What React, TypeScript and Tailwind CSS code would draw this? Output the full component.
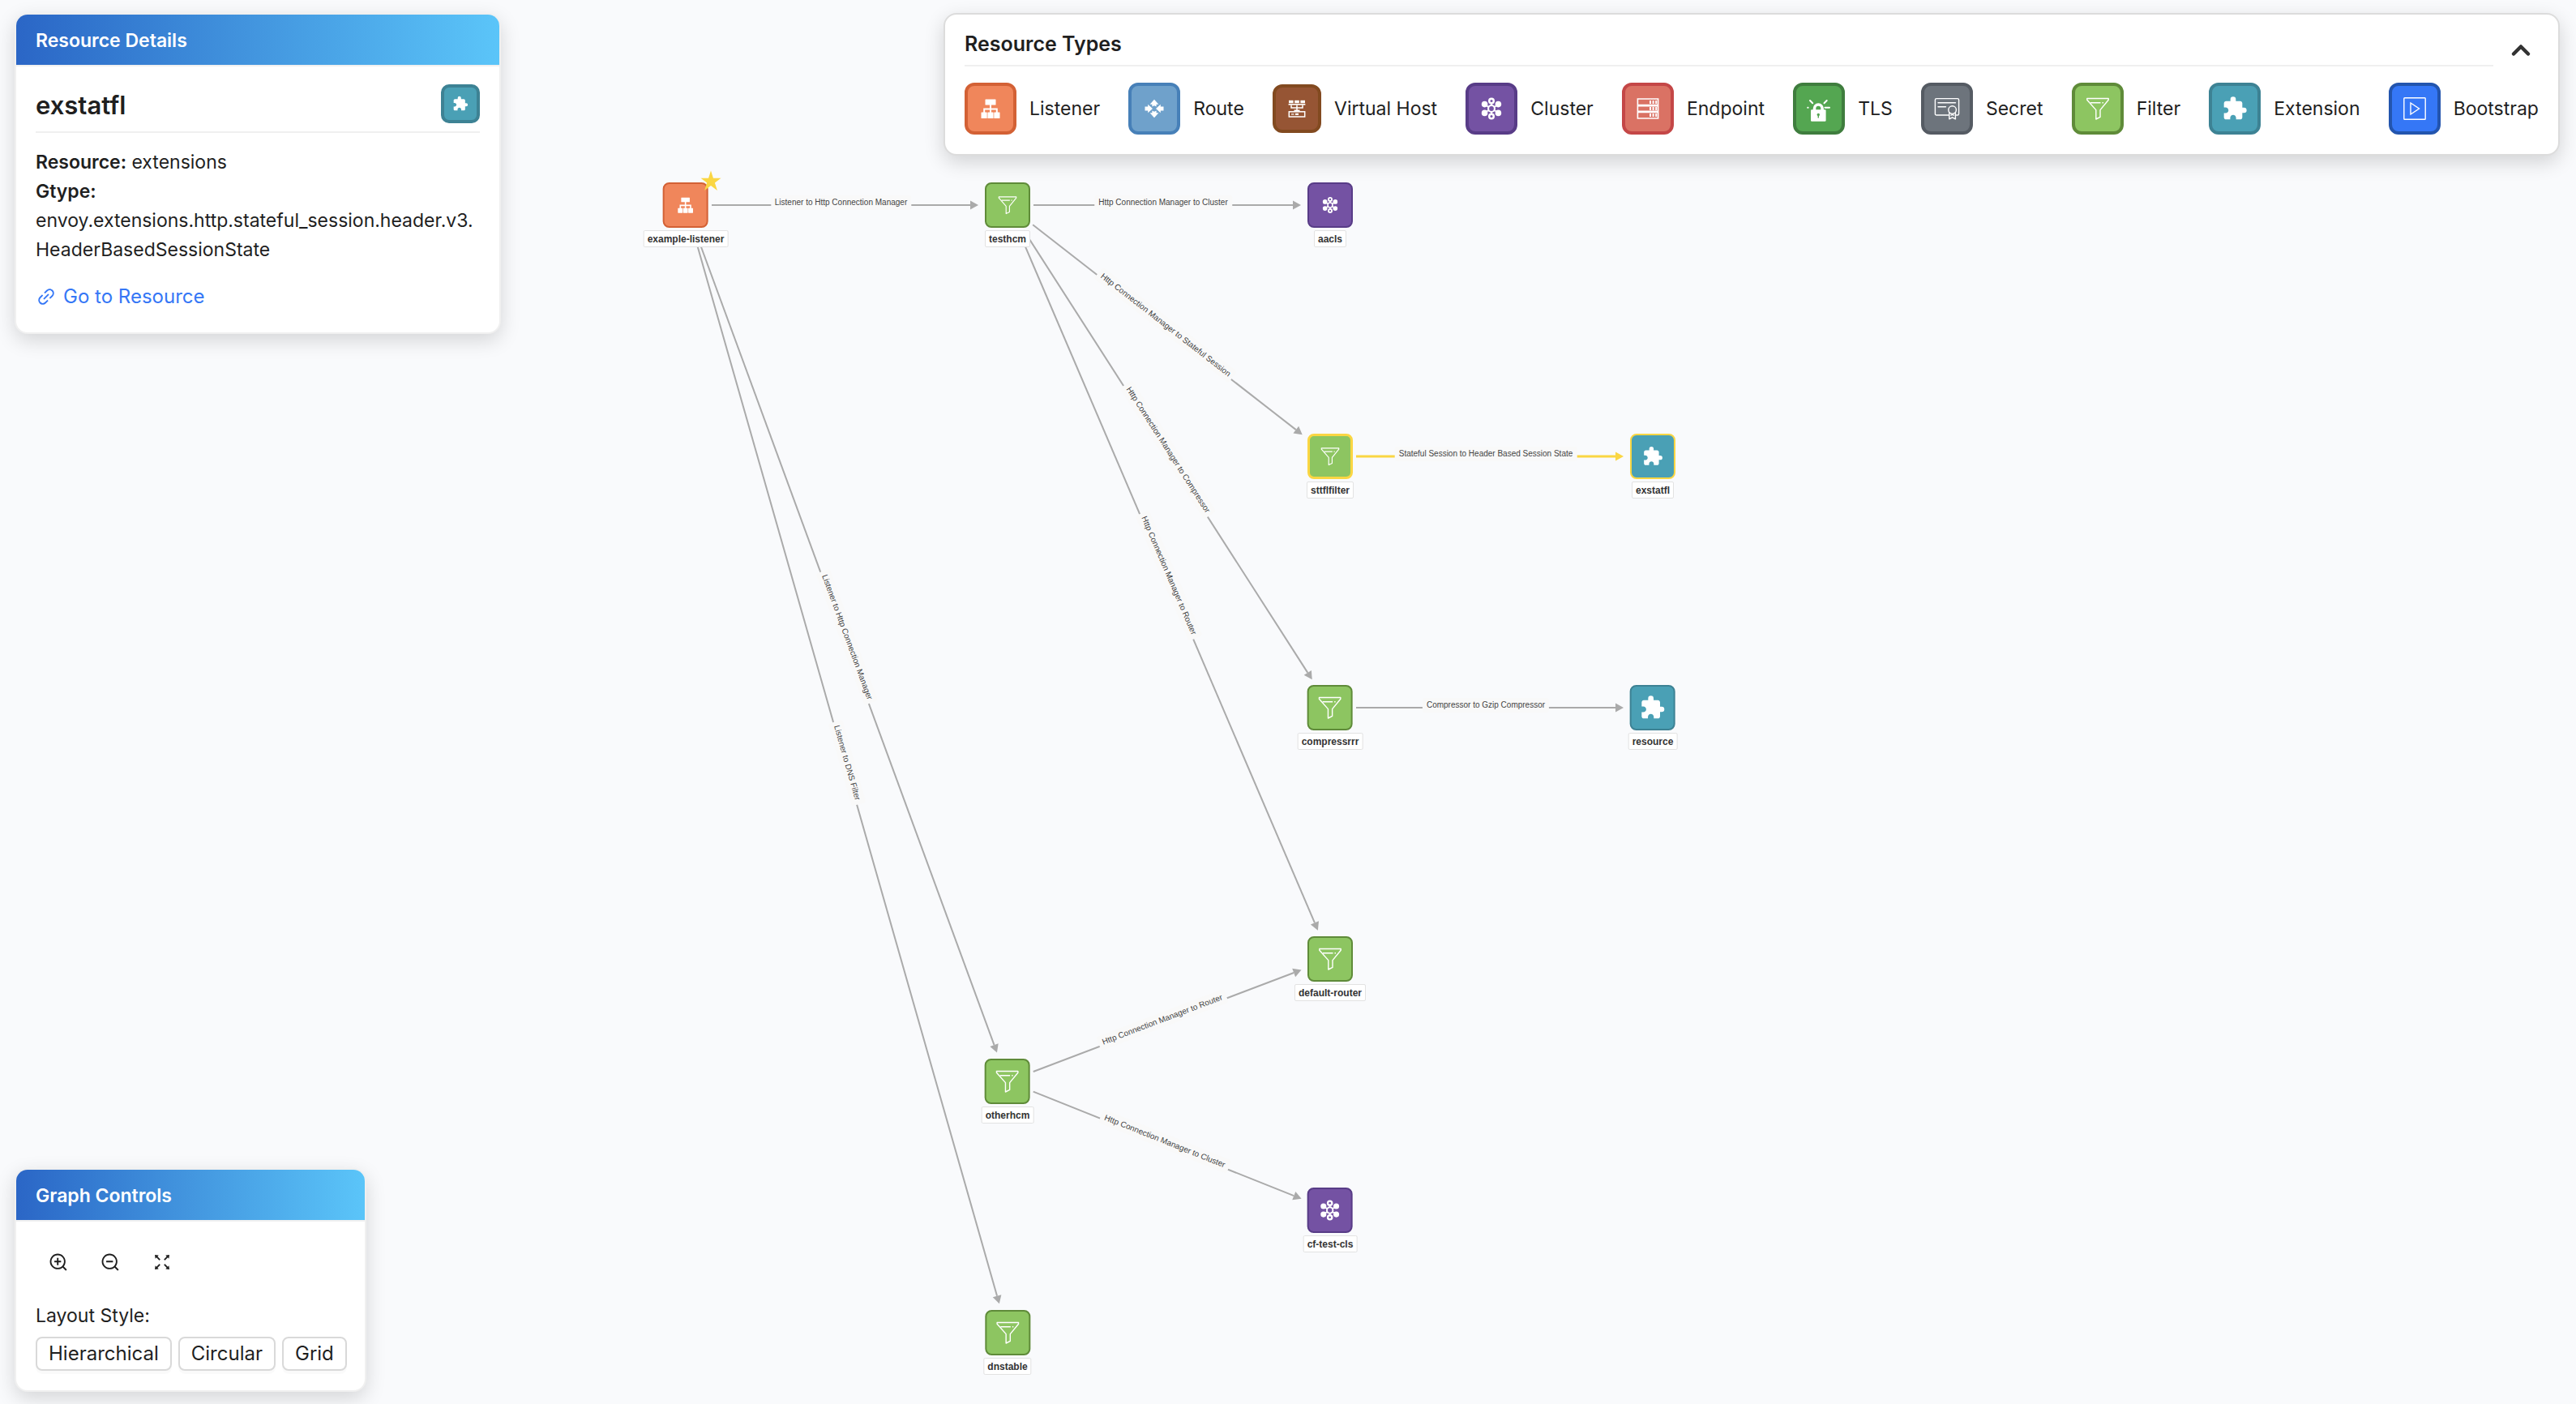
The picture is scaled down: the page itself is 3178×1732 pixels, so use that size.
import type { CSSProperties, ReactNode } from "react";
import { AiOutlineFullscreen, AiOutlineLink, AiOutlineZoomIn, AiOutlineZoomOut } from "react-icons/ai";
import { ChevronUp } from "lucide-react";
import { MdExtension } from "react-icons/md";

type IconProps = { className?: string };

function Glyph({ className, children }: IconProps & { children: ReactNode }) {
  return (
    <svg viewBox="0 0 32 32" className={className} fill="none" aria-hidden="true">
      {children}
    </svg>
  );
}

function ListenerIcon({ className }: IconProps) {
  return (
    <Glyph className={className}>
      <g fill="#fff">
        <rect x="9.5" y="4.5" width="13" height="7" rx="0.5" />
        <rect x="4.5" y="20.5" width="7.2" height="7.5" rx="0.5" />
        <rect x="12.4" y="20.5" width="7.2" height="7.5" rx="0.5" />
        <rect x="20.3" y="20.5" width="7.2" height="7.5" rx="0.5" />
      </g>
      <path d="M16 11v10M8.2 21v-4.5h15.6V21" stroke="#fff" strokeWidth="2" />
    </Glyph>
  );
}

function RouteIcon({ className }: IconProps) {
  return (
    <Glyph className={className}>
      <g fill="#fff">
        <path d="M16 4.8 21.4 10.8H18.6V13.6L16 12.2 13.4 13.6V10.8H10.6Z" />
        <path d="M16 27.2 21.4 21.2H18.6V18.4L16 19.8 13.4 18.4V21.2H10.6Z" />
        <path d="M4.5 13.6H8.2V10.8L14 16 8.2 21.2V18.4H4.5Z" />
        <path d="M27.5 13.6H23.8V10.8L18 16 23.8 21.2V18.4H27.5Z" />
      </g>
    </Glyph>
  );
}

function VirtualHostIcon({ className }: IconProps) {
  return (
    <Glyph className={className}>
      <g fill="#fff">
        <rect x="6" y="5.8" width="5.6" height="3.4" />
        <rect x="13.2" y="5.8" width="5.6" height="3.4" />
        <rect x="20.4" y="5.8" width="5.6" height="3.4" />
        <rect x="5.6" y="10" width="20.8" height="1.6" />
      </g>
      <path d="M9 11.500v3.500h14v-3.500M16 11.500v7M12.500 18.200h7" stroke="#fff" strokeWidth="1.5" />
      <rect x="6.3" y="19.8" width="19.4" height="6.2" stroke="#fff" strokeWidth="1.5" />
      <rect x="9" y="21.8" width="3.500" height="2.2" fill="#fff" opacity="0.6" />
      <rect x="14" y="21.8" width="4" height="2.2" fill="#fff" />
    </Glyph>
  );
}

function ClusterIcon({ className }: IconProps) {
  return (
    <Glyph className={className}>
      <path d="M16 8v16M8 11.2l16 9.6M24 11.2 8 20.8" stroke="#fff" strokeWidth="1.8" />
      <g fill="#fff">
        <circle cx="7.6" cy="10.6" r="3.8" />
        <circle cx="24.4" cy="10.6" r="3.8" />
        <circle cx="7.6" cy="21.4" r="3.8" />
        <circle cx="24.4" cy="21.4" r="3.8" />
        <circle cx="16" cy="6.6" r="4" />
        <circle cx="16" cy="25.4" r="4" />
        <circle cx="16" cy="16" r="5" />
      </g>
      <g fill="#7452a3">
        <circle cx="16" cy="6.6" r="1.5" />
        <circle cx="16" cy="25.4" r="1.5" />
        <circle cx="16" cy="16" r="2.9" />
      </g>
    </Glyph>
  );
}

function EndpointIcon({ className }: IconProps) {
  return (
    <Glyph className={className}>
      <path
        d="M3.4 4h25.2v24H3.4ZM3.4 11.5h25.2M3.4 12.6h25.2M3.4 19.4h25.2M3.4 20.5h25.2"
        stroke="#fff"
        strokeWidth="1.6"
      />
      <path
        d="M18 8h2M21.6 8h2M25.2 8h2M18 16h2M21.6 16h2M25.2 16h2M18 24h2M21.6 24h2M25.2 24h2"
        stroke="#fff"
        strokeWidth="4"
      />
    </Glyph>
  );
}

function TlsIcon({ className }: IconProps) {
  return (
    <Glyph className={className}>
      <rect x="6" y="17.300" width="18.600" height="14.400" rx="1.200" fill="#fff" />
      <path d="M10.500 18v-2.200a4.800 4.800 0 0 1 9.600 0V18" stroke="#fff" strokeWidth="3.600" />
      <path
        d="M5 6l3.200 3.300M25.700 6l-3.200 3.300M23.400 14.700h5.600M2.200 14.700h.4"
        stroke="#fff"
        strokeWidth="2"
        strokeLinecap="round"
      />
      <circle cx="15.300" cy="23.400" r="1.700" fill="#54a651" />
      <path d="M15.300 23.500v4" stroke="#54a651" strokeWidth="1.400" />
    </Glyph>
  );
}

function SecretIcon({ className }: IconProps) {
  return (
    <Glyph className={className}>
      <g stroke="#fff" strokeWidth="1.4" strokeLinejoin="round" strokeLinecap="round">
        <path d="M18 24H3a1.6 1.6 0 0 1-1.600-1.600V5.200A1.600 1.600 0 0 1 3 3.600h26a1.600 1.600 0 0 1 1.600 1.600V22.400A1.600 1.600 0 0 1 29 24H27.500" />
        <path d="M5 8.800h21.500M5 13.800h9.500" />
        <circle cx="22.6" cy="17.600" r="4.800" />
        <path d="M18.800 21v7.800l3.800-2 3.800 2V21" />
        <path d="M21 24.200l1.600-.8 1.600.8" />
      </g>
    </Glyph>
  );
}

function FilterIcon({ className }: IconProps) {
  return (
    <Glyph className={className}>
      <g stroke="#fff" strokeWidth="1.400" strokeLinejoin="round">
        <path d="M2.800 3.500H29.200V5.200L19 17.600V26.400L13.800 29V17.600L2.800 5.200Z" />
        <path d="M7 8.800H19.500M21.500 8.800H23" />
      </g>
    </Glyph>
  );
}

function ExtensionIcon({ className }: IconProps) {
  return <MdExtension className={className} color="#fff" aria-hidden="true" />;
}

function BootstrapIcon({ className }: IconProps) {
  return (
    <Glyph className={className}>
      <rect x="2.800" y="2.800" width="26.400" height="26.400" rx="0.800" stroke="#fff" strokeWidth="1.400" />
      <path d="M11 9v14l10.500-7Z" stroke="#fff" strokeWidth="1.400" />
    </Glyph>
  );
}

const LEGEND = [
  { label: "Listener", Icon: ListenerIcon, box: "size-16 bg-[#f0865b] border-[#d36135]" },
  { label: "Route", Icon: RouteIcon, box: "size-16 bg-[#6fa1cb] border-[#4780b8]" },
  { label: "Virtual Host", Icon: VirtualHostIcon, box: "size-[60px] bg-[#965534] border-[#824a20]" },
  { label: "Cluster", Icon: ClusterIcon, box: "size-16 bg-[#7452a3] border-[#583c87]" },
  { label: "Endpoint", Icon: EndpointIcon, box: "size-16 bg-[#da7264] border-[#c44747]" },
  { label: "TLS", Icon: TlsIcon, box: "size-16 bg-[#54a651] border-[#3f7d3e]" },
  { label: "Secret", Icon: SecretIcon, box: "size-16 bg-[#6d747c] border-[#555b63]" },
  { label: "Filter", Icon: FilterIcon, box: "size-16 bg-[#8dc561] border-[#5f8b39]" },
  { label: "Extension", Icon: ExtensionIcon, box: "size-16 bg-[#4aa0b5] border-[#3d8294]" },
  { label: "Bootstrap", Icon: BootstrapIcon, box: "size-16 bg-[#3577f6] border-[#2355ae]" },
];

const ORANGE = "bg-[#f0865b] border-2 border-[#d36135]";
const GREEN = "bg-[#8dc561] border-2 border-[#5f8b39]";
const PURPLE = "bg-[#7452a3] border-2 border-[#583c87]";
const TEAL = "bg-[#4aa0b5] border-2 border-[#3d8294]";

type GraphNode = {
  id: string;
  x: number;
  y: number;
  Icon: (props: IconProps) => ReactNode;
  icon: string;
  box: string;
};

const NODES: GraphNode[] = [
  { id: "example-listener", x: 846, y: 253, Icon: ListenerIcon, icon: "size-[26px]", box: ORANGE },
  { id: "testhcm", x: 1243, y: 253, Icon: FilterIcon, icon: "size-[26px]", box: GREEN },
  { id: "aacls", x: 1641, y: 253, Icon: ClusterIcon, icon: "size-6", box: PURPLE },
  { id: "sttflfilter", x: 1641, y: 563, Icon: FilterIcon, icon: "size-[26px]", box: "bg-[#8dc561] border-[3px] border-[#fad643]" },
  { id: "exstatfl", x: 2039, y: 563, Icon: ExtensionIcon, icon: "size-[26px]", box: "bg-[#4aa0b5] border-2 border-[#fad643]" },
  { id: "compressrrr", x: 1641, y: 873, Icon: FilterIcon, icon: "size-8", box: GREEN },
  { id: "resource", x: 2039, y: 873, Icon: ExtensionIcon, icon: "size-8", box: TEAL },
  { id: "default-router", x: 1641, y: 1183, Icon: FilterIcon, icon: "size-8", box: GREEN },
  { id: "otherhcm", x: 1243, y: 1334, Icon: FilterIcon, icon: "size-8", box: GREEN },
  { id: "cf-test-cls", x: 1641, y: 1493, Icon: ClusterIcon, icon: "size-[30px]", box: PURPLE },
  { id: "dnstable", x: 1243, y: 1644, Icon: FilterIcon, icon: "size-8", box: GREEN },
];

const EDGES = [
  { from: "example-listener", to: "testhcm", label: "Listener to Http Connection Manager" },
  { from: "example-listener", to: "otherhcm", label: "Listener to Http Connection Manager" },
  { from: "example-listener", to: "dnstable", label: "Listener to DNS Filter" },
  { from: "testhcm", to: "aacls", label: "Http Connection Manager to Cluster" },
  { from: "testhcm", to: "sttflfilter", label: "Http Connection Manager to Stateful Session" },
  { from: "testhcm", to: "compressrrr", label: "Http Connection Manager to Compressor" },
  { from: "testhcm", to: "default-router", label: "Http Connection Manager to Router" },
  { from: "sttflfilter", to: "exstatfl", label: "Stateful Session to Header Based Session State", active: true },
  { from: "compressrrr", to: "resource", label: "Compressor to Gzip Compressor" },
  { from: "otherhcm", to: "default-router", label: "Http Connection Manager to Router" },
  { from: "otherhcm", to: "cf-test-cls", label: "Http Connection Manager to Cluster" },
];

const HALF_NODE = 28;
const SOURCE_GAP = 4;
const TARGET_GAP = 8;
const ARROW = 10;
const LABEL_LIFT = 3;

function edgeGeometry(fromId: string, toId: string) {
  const a = NODES.find((n) => n.id === fromId)!;
  const b = NODES.find((n) => n.id === toId)!;
  const dx = b.x - a.x;
  const dy = b.y - a.y;
  const length = Math.hypot(dx, dy);
  const ux = dx / length;
  const uy = dy / length;
  const edge = HALF_NODE / Math.max(Math.abs(ux), Math.abs(uy));
  const x1 = a.x + ux * (edge + SOURCE_GAP);
  const y1 = a.y + uy * (edge + SOURCE_GAP);
  const x2 = b.x - ux * (edge + TARGET_GAP);
  const y2 = b.y - uy * (edge + TARGET_GAP);
  const bx = x2 - ux * ARROW;
  const by = y2 - uy * ARROW;
  return { x1, y1, x2, y2, bx, by, ux, uy, angle: (Math.atan2(dy, dx) * 180) / Math.PI };
}

function Graph() {
  return (
    <div className="absolute inset-0 overflow-hidden font-['Liberation_Sans',Arial,sans-serif]">
      <svg className="absolute inset-0 size-full" aria-hidden="true">
        {EDGES.map(({ from, to, active }) => {
          const { x1, y1, x2, y2, bx, by, ux, uy } = edgeGeometry(from, to);
          const w = ARROW / 2 + 0.5;
          const color = active ? "#fad643" : "#aaaaaa";
          return (
            <g key={`${from}-${to}`}>
              <line x1={x1} y1={y1} x2={bx} y2={by} stroke={color} strokeWidth={active ? 3 : 2} />
              <polygon
                points={`${x2},${y2} ${bx - uy * w},${by + ux * w} ${bx + uy * w},${by - ux * w}`}
                fill={color}
              />
            </g>
          );
        })}
      </svg>
      {EDGES.map(({ from, to, label }) => {
        const { x1, y1, bx, by, ux, uy, angle } = edgeGeometry(from, to);
        const style: CSSProperties = {
          left: (x1 + bx) / 2 + uy * LABEL_LIFT,
          top: (y1 + by) / 2 - ux * LABEL_LIFT,
          transform: `translate(-50%, -50%) rotate(${angle}deg)`,
        };
        return (
          <span
            key={`${from}-${to}`}
            style={style}
            className="absolute rounded-[3px] bg-[#f9f9f9] px-[5px] py-[3px] text-[10px] leading-3 whitespace-nowrap text-[#444]"
          >
            {label}
          </span>
        );
      })}
      {NODES.map(({ id, x, y, Icon, icon, box }) => (
        <div
          key={id}
          style={{ left: x, top: y - HALF_NODE }}
          className="absolute flex -translate-x-1/2 flex-col items-center gap-[3px]"
        >
          <div className={`flex size-14 items-center justify-center rounded-lg ${box}`}>
            <Icon className={icon} />
          </div>
          <span className="rounded-xs border border-[#e2e2e2] bg-white px-1 pt-px text-[12px] leading-[18px] font-bold whitespace-nowrap text-[#333]">
            {id}
          </span>
        </div>
      ))}
      <svg viewBox="0 0 24 24" style={{ left: 864, top: 210 }} className="absolute size-[26px]" aria-hidden="true">
        <path
          fill="#fad643"
          d="M12 0.500 14.700 9H23.500L16.500 14.200 19.300 23 12 17.600 4.700 23 7.500 14.200 0.500 9H9.300Z"
        />
      </svg>
    </div>
  );
}

function Panel({ title, className, children }: { title: string; className: string; children: ReactNode }) {
  return (
    <section
      className={`relative shrink-0 rounded-2xl border-2 border-[#f0f0f0] bg-white shadow-[0_8px_24px_rgba(0,0,0,0.15)] ${className}`}
    >
      <h2 className="rounded-t-[14px] border-b-2 border-[#f0f0f0] bg-linear-to-r from-[#2b66c6] via-[#4396df] to-[#5bc5f9] bg-clip-padding px-6 pt-[14px] pb-3 text-[23px] leading-9 font-semibold text-white">
        {title}
      </h2>
      {children}
    </section>
  );
}

function ResourceDetails() {
  return (
    <Panel title="Resource Details" className="w-[600px]">
      <div className="px-6 pt-[22px] pb-[26px]">
        <div className="flex items-center justify-between border-b-2 border-[#f0f0f0] pb-[10px]">
          <h3 className="pt-1 text-[31px] leading-10 font-semibold">exstatfl</h3>
          <div className="flex size-12 items-center justify-center rounded-[10px] border-4 border-[#3d8294] bg-[#4aa0b5]">
            <ExtensionIcon className="size-5" />
          </div>
        </div>
        <div className="mt-[18px] text-[23px] leading-9">
          <p>
            <strong className="font-semibold">Resource:</strong> extensions
          </p>
          <p className="font-semibold">Gtype:</p>
          <p>
            envoy.extensions.http.stateful_session.header.v3.
            <wbr />
            HeaderBasedSessionState
          </p>
        </div>
        <a href="#resource" className="mt-[22px] flex w-fit items-center gap-2 text-[24px] leading-9 text-[#3577f6]">
          <AiOutlineLink className="size-[26px]" aria-hidden="true" />
          Go to Resource
        </a>
      </div>
    </Panel>
  );
}

function ResourceTypes() {
  return (
    <section className="relative w-[1994px] shrink rounded-2xl border-2 border-[#dcdcdc] bg-white px-6 pb-6 shadow-[0_8px_24px_rgba(0,0,0,0.16)]">
      <div className="flex items-end">
        <h2 className="grow border-b-2 border-[#efefef] pt-[18px] pb-2 text-[25px] leading-9 font-semibold">
          Resource Types
        </h2>
        <button
          type="button"
          aria-label="Collapse resource types"
          className="ml-3 flex h-10 w-11 items-center justify-center text-[#333]"
        >
          <ChevronUp className="size-9" strokeWidth={3} />
        </button>
      </div>
      <ul className="mt-5 flex items-center justify-between">
        {LEGEND.map(({ label, Icon, box }) => (
          <li key={label} className="flex items-center gap-4 text-[23px] leading-9">
            <span className={`flex items-center justify-center rounded-xl border-4 ${box}`}>
              <Icon className="size-8" />
            </span>
            {label}
          </li>
        ))}
      </ul>
    </section>
  );
}

function GraphControls() {
  const iconButton = "flex h-12 w-14 items-center justify-center";
  return (
    <Panel title="Graph Controls" className="w-[434px]">
      <div className="px-6 pt-[26px] pb-6">
        <div className="flex gap-2">
          <button type="button" aria-label="Zoom in" className={iconButton}>
            <AiOutlineZoomIn className="size-[26px]" />
          </button>
          <button type="button" aria-label="Zoom out" className={iconButton}>
            <AiOutlineZoomOut className="size-[26px]" />
          </button>
          <button type="button" aria-label="Fit to screen" className={iconButton}>
            <AiOutlineFullscreen className="size-[26px]" />
          </button>
        </div>
        <p className="mt-6 text-[23px] leading-9">Layout Style:</p>
        <div className="mt-2 flex gap-2">
          {["Hierarchical", "Circular", "Grid"].map((name) => (
            <button
              key={name}
              type="button"
              className="rounded-lg border-2 border-[#d9d9d9] bg-white px-[14px] py-px text-[24px] leading-9 shadow-[0_4px_0_rgba(0,0,0,0.02)]"
            >
              {name}
            </button>
          ))}
        </div>
      </div>
    </Panel>
  );
}

export default function App() {
  return (
    <main className="relative flex min-h-screen flex-col justify-between bg-[#f9fafc] pt-4 pr-5 pb-[15px] pl-[18px] font-[Inter,sans-serif] text-[#1f1f1f]">
      <Graph />
      <div className="flex items-start justify-between gap-8">
        <ResourceDetails />
        <ResourceTypes />
      </div>
      <GraphControls />
    </main>
  );
}
